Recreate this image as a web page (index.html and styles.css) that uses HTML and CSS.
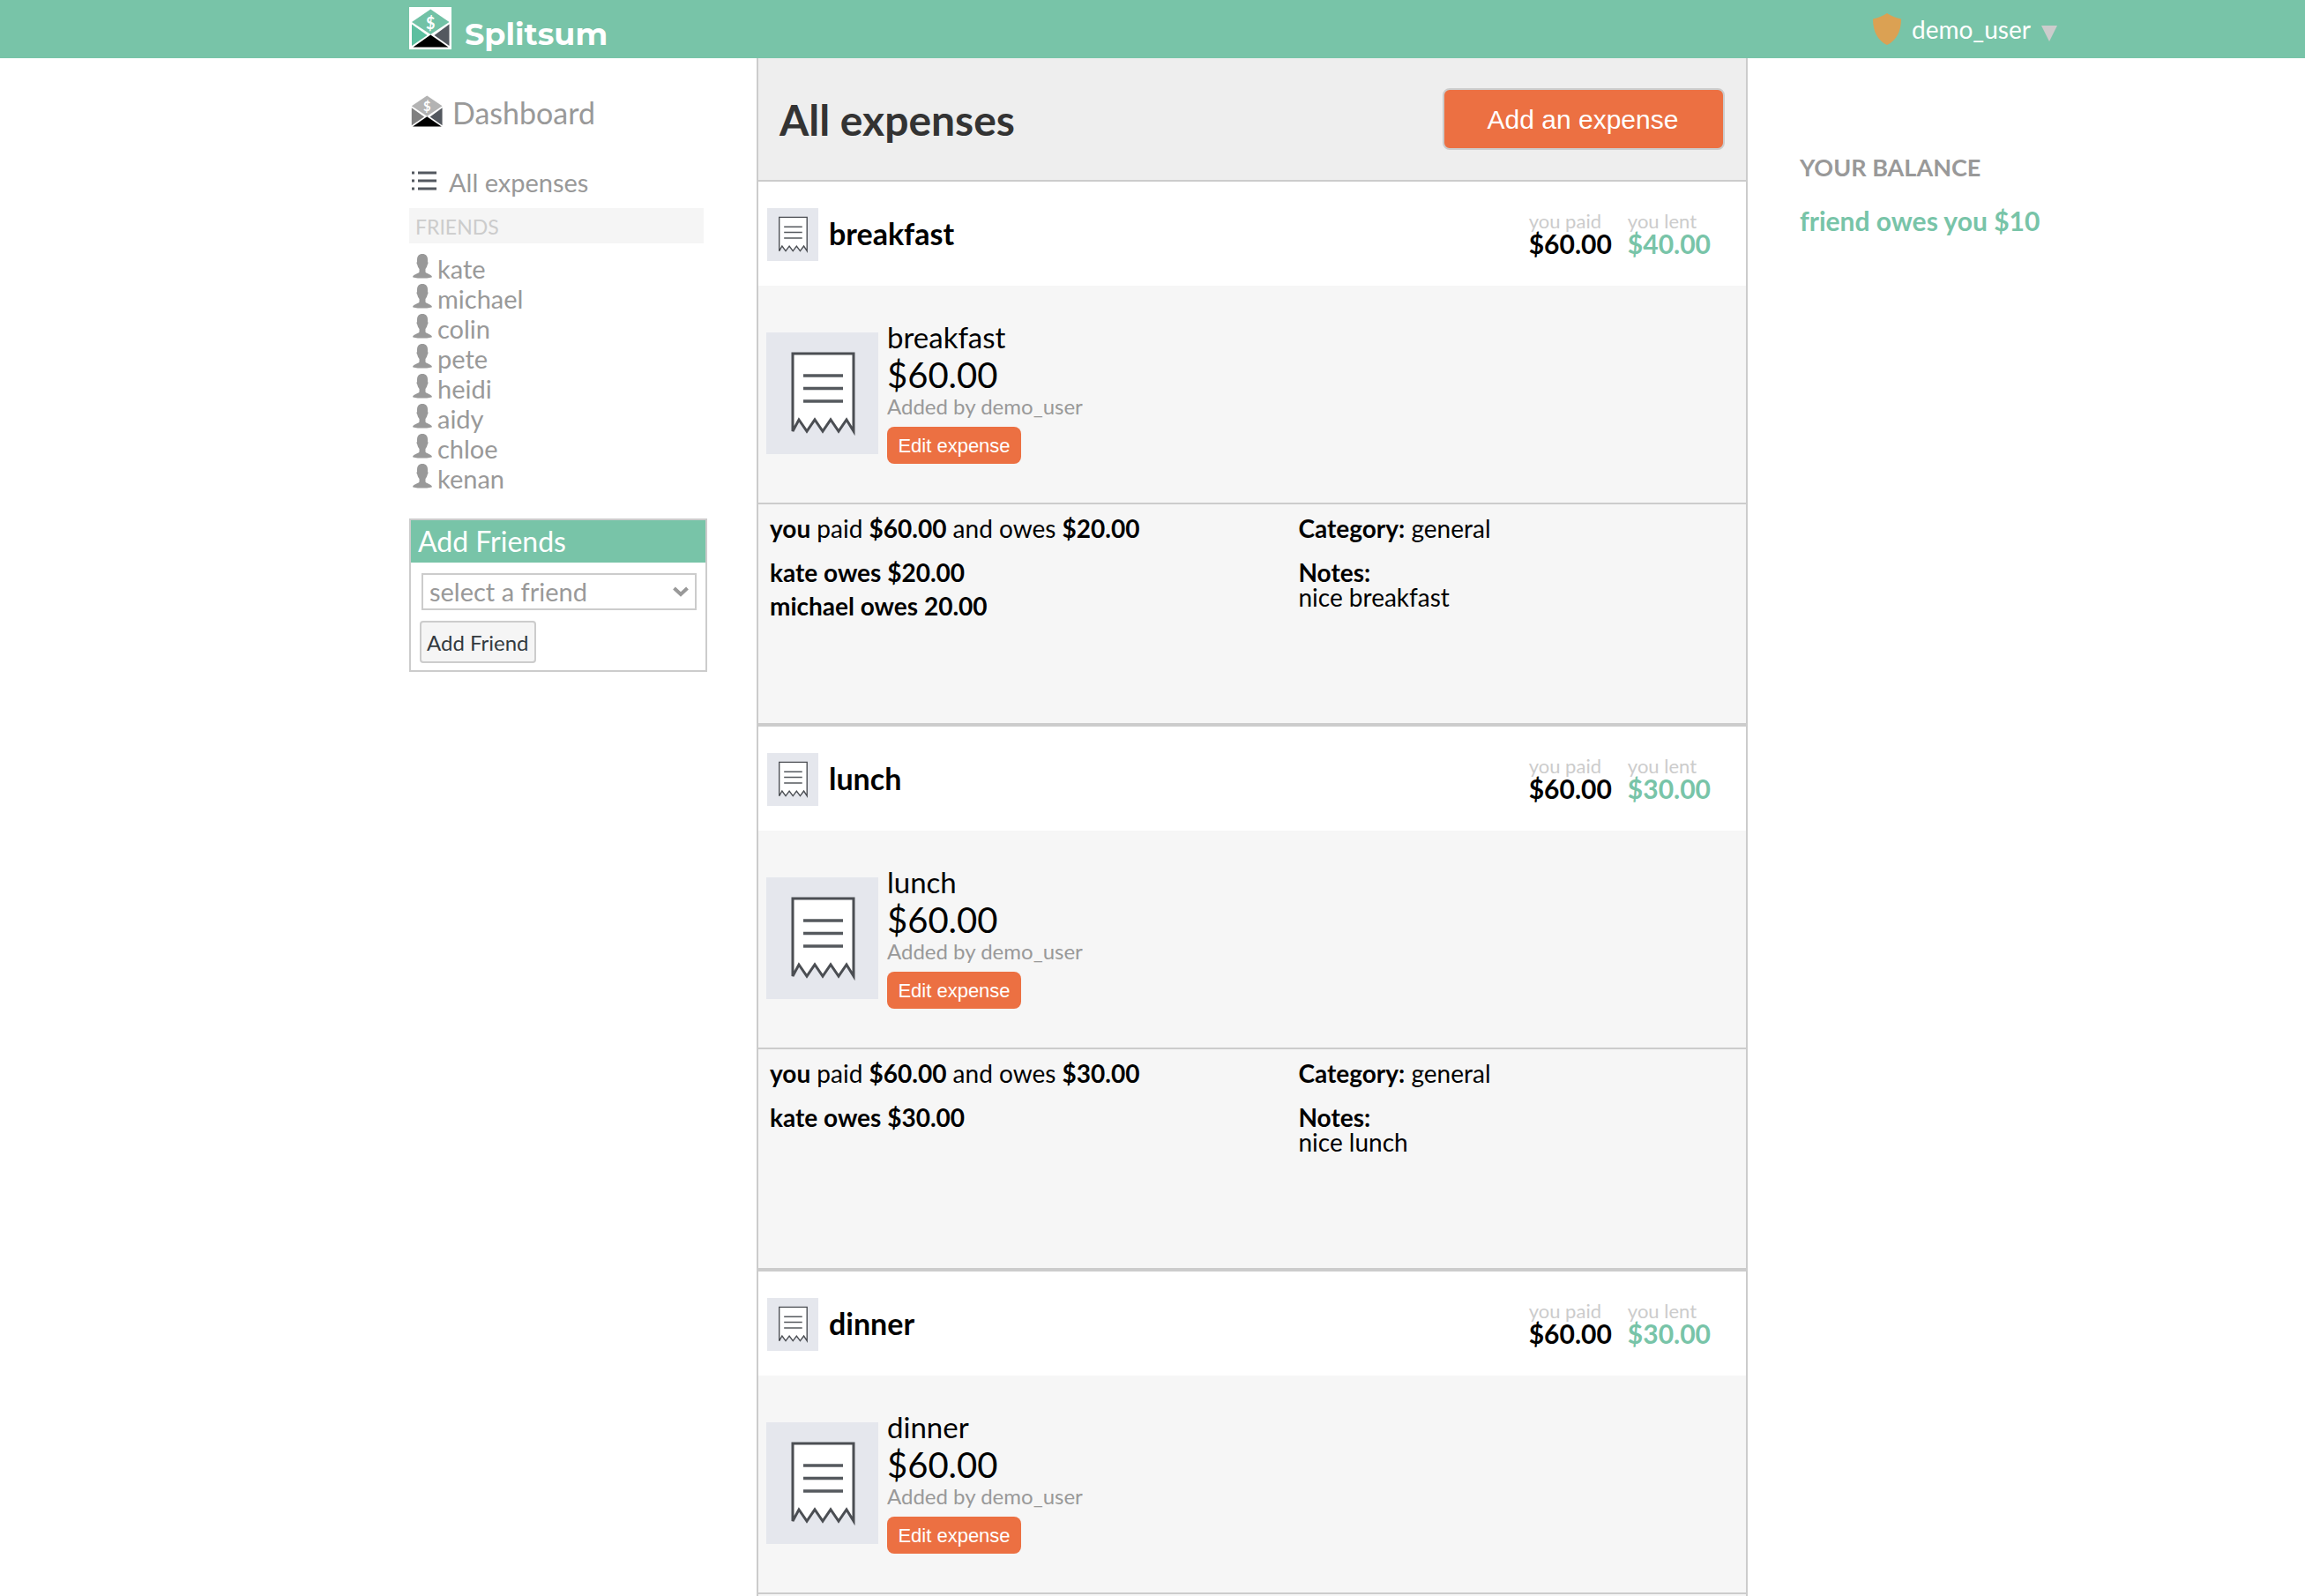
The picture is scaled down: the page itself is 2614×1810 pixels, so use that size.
FILE: index.html
```html
<!DOCTYPE html>
<html lang="en">
<head>
<meta charset="utf-8">
<title>Splitsum</title>
<meta name="viewport" content="width=device-width, initial-scale=1">
<link rel="stylesheet" href="styles.css">
</head>
<body>
<svg class="sprite" aria-hidden="true">
  <symbol id="envelope" viewBox="0 0 48 48">
    <path class="env-top" d="M24.300 2.500 45.500 17 24.300 31 3 17Z"/>
    <path class="env-left" d="M3 19.500V44L20.500 32Z"/>
    <path class="env-right" d="M45.500 19.500V44L28.500 32Z"/>
    <path fill="#000" d="M4.500 45.500H44.500L24.300 31.500Z"/>
    <text class="env-sign" x="24.300" y="24.500" text-anchor="middle">$</text>
  </symbol>
  <symbol id="receipt" viewBox="0 0 127 138" preserveAspectRatio="none">
    <rect width="127" height="138" fill="#e5e7ed"/>
    <path d="M30 24H99V112L91 99 82 112 73 99 64 112 55 99 46 112 37 99 30 112Z" fill="#fff" stroke="#4b4e53" stroke-width="3"/>
    <path d="M42 49H87M42 63.500H87M42 78H87" stroke="#55595e" stroke-width="3.500"/>
  </symbol>
  <symbol id="person" viewBox="0 0 22 28">
    <path fill="#999" d="M11 0C15 0 17 2.500 17 6.500V9C17.800 9.200 17.600 11.500 16.600 12.500 16.300 14.500 15.500 15.800 14.500 17V20.500C15.500 22.500 21.500 23 22 26.200 19 28 3 28 0 26.200 0.500 23 6.500 22.500 7.500 20.500V17C6.500 15.800 5.700 14.500 5.400 12.500 4.400 11.500 4.200 9.200 5 9V6.500C5 2.500 7 0 11 0Z"/>
  </symbol>
</svg>

<header class="topbar">
  <a class="brand" href="#">
    <svg class="brand-logo" aria-hidden="true"><use href="#envelope"/></svg>
    <span>Splitsum</span>
  </a>
  <button class="user" type="button">
    <svg class="user-shield" viewBox="0 0 32 36" aria-hidden="true"><path fill="#dba153" d="M16 0C20.500 3 25 4.800 32 6.500 32 21 26.500 31 16 36 5.500 31 0 21 0 6.500 7 4.800 11.500 3 16 0Z"/></svg>
    <span>demo_user</span>
    <svg class="user-caret" viewBox="0 0 18 18" aria-hidden="true"><path fill="#ccc" d="M0 0H18L9 18Z"/></svg>
  </button>
</header>

<div class="page">
  <aside class="sidebar">
    <nav class="nav">
      <a class="nav-dashboard" href="#">
        <svg class="dashboard-icon" viewBox="2 2 44 44" aria-hidden="true"><use href="#envelope" width="48" height="48"/></svg>
        <span>Dashboard</span>
      </a>
      <a class="nav-expenses" href="#">
        <svg class="list-icon" viewBox="0 0 28 22" aria-hidden="true"><path stroke="#53585f" stroke-width="3" d="M0 2H3M7 2H28M0 11H3M7 11H28M0 20H3M7 20H28"/></svg>
        <span>All expenses</span>
      </a>
    </nav>
    <h2 class="friends-title">FRIENDS</h2>
    <ul class="friends">
      <li><a href="#"><svg class="person" aria-hidden="true"><use href="#person"/></svg>kate</a></li>
      <li><a href="#"><svg class="person" aria-hidden="true"><use href="#person"/></svg>michael</a></li>
      <li><a href="#"><svg class="person" aria-hidden="true"><use href="#person"/></svg>colin</a></li>
      <li><a href="#"><svg class="person" aria-hidden="true"><use href="#person"/></svg>pete</a></li>
      <li><a href="#"><svg class="person" aria-hidden="true"><use href="#person"/></svg>heidi</a></li>
      <li><a href="#"><svg class="person" aria-hidden="true"><use href="#person"/></svg>aidy</a></li>
      <li><a href="#"><svg class="person" aria-hidden="true"><use href="#person"/></svg>chloe</a></li>
      <li><a href="#"><svg class="person" aria-hidden="true"><use href="#person"/></svg>kenan</a></li>
    </ul>
    <form class="add-friends">
      <label class="add-friends-title" for="friend">Add Friends</label>
      <div class="add-friends-body">
        <div class="select">
          <select id="friend"><option>select a friend</option></select>
          <svg class="select-arrow" viewBox="0 0 18 12" aria-hidden="true"><path fill="none" stroke="#999" stroke-width="4" d="M1.500 2 9 9 16.500 2"/></svg>
        </div>
        <button class="add-friend" type="button">Add Friend</button>
      </div>
    </form>
  </aside>

  <main class="main">
    <div class="main-head">
      <h1>All expenses</h1>
      <button class="add-expense" type="button">Add an expense</button>
    </div>

    <article class="expense">
      <div class="summary">
        <svg class="receipt-small" aria-hidden="true"><use href="#receipt"/></svg>
        <h2>breakfast</h2>
        <div class="amount"><span>you paid</span><strong>$60.00</strong></div>
        <div class="amount lent"><span>you lent</span><strong>$40.00</strong></div>
      </div>
      <div class="detail">
        <svg class="receipt-large" aria-hidden="true"><use href="#receipt"/></svg>
        <div class="detail-text">
          <p class="detail-name">breakfast</p>
          <p class="detail-total">$60.00</p>
          <p class="detail-by">Added by demo_user</p>
          <button class="edit" type="button">Edit expense</button>
        </div>
      </div>
      <div class="split">
        <div>
          <p class="split-lead"><b>you</b> paid <b>$60.00</b> and owes <b>$20.00</b></p>
          <ul class="owes"><li>kate owes $20.00</li><li>michael owes 20.00</li></ul>
        </div>
        <div>
          <p class="split-lead"><b>Category:</b> general</p>
          <p><b>Notes:</b><br>nice breakfast</p>
        </div>
      </div>
    </article>

    <article class="expense">
      <div class="summary">
        <svg class="receipt-small" aria-hidden="true"><use href="#receipt"/></svg>
        <h2>lunch</h2>
        <div class="amount"><span>you paid</span><strong>$60.00</strong></div>
        <div class="amount lent"><span>you lent</span><strong>$30.00</strong></div>
      </div>
      <div class="detail">
        <svg class="receipt-large" aria-hidden="true"><use href="#receipt"/></svg>
        <div class="detail-text">
          <p class="detail-name">lunch</p>
          <p class="detail-total">$60.00</p>
          <p class="detail-by">Added by demo_user</p>
          <button class="edit" type="button">Edit expense</button>
        </div>
      </div>
      <div class="split">
        <div>
          <p class="split-lead"><b>you</b> paid <b>$60.00</b> and owes <b>$30.00</b></p>
          <ul class="owes"><li>kate owes $30.00</li></ul>
        </div>
        <div>
          <p class="split-lead"><b>Category:</b> general</p>
          <p><b>Notes:</b><br>nice lunch</p>
        </div>
      </div>
    </article>

    <article class="expense">
      <div class="summary">
        <svg class="receipt-small" aria-hidden="true"><use href="#receipt"/></svg>
        <h2>dinner</h2>
        <div class="amount"><span>you paid</span><strong>$60.00</strong></div>
        <div class="amount lent"><span>you lent</span><strong>$30.00</strong></div>
      </div>
      <div class="detail">
        <svg class="receipt-large" aria-hidden="true"><use href="#receipt"/></svg>
        <div class="detail-text">
          <p class="detail-name">dinner</p>
          <p class="detail-total">$60.00</p>
          <p class="detail-by">Added by demo_user</p>
          <button class="edit" type="button">Edit expense</button>
        </div>
      </div>
    </article>
  </main>

  <aside class="balance">
    <h2>YOUR BALANCE</h2>
    <p>friend owes you $10</p>
  </aside>
</div>
</body>
</html>
```
FILE: styles.css
```css
:root {
  --green: #78c4a8;
  --orange: #ec7042;
  --line: #ccc;
  --muted: #999;
  --panel: #f6f6f6;
  --columns: 464fr 394fr 1124fr 632fr;
  --env-top: #72c2a6;
  --env-left: #5cbfa0;
}

* { box-sizing: border-box; }

body {
  display: flex;
  flex-direction: column;
  min-height: 100vh;
  margin: 0;
  background: #fff;
  color: #000;
  font: 28px/28px Lato, "Open Sans", sans-serif;
}

h1, h2, p, ul { margin: 0; padding: 0; }
ul { list-style: none; }
a { color: inherit; text-decoration: none; }
svg { display: block; flex: none; }
button, select { font: inherit; cursor: pointer; }

.sprite { display: none; }
.env-top { fill: var(--env-top); }
.env-left { fill: var(--env-left); }
.env-right { fill: #53585f; }
.env-sign { fill: #fff; font: bold 18px Lato, sans-serif; }

/* Top bar */
.topbar {
  display: grid;
  grid-template-columns: var(--columns);
  align-items: center;
  height: 66px;
  background: var(--green);
  color: #fff;
}
.brand {
  grid-column: 2;
  display: flex;
  align-items: center;
  gap: 15px;
  font: bold 35px/48px Montserrat, Inter, sans-serif;
}
.brand span { padding-top: 12px; }
.brand-logo { width: 48px; height: 48px; margin-bottom: 2px; background: #fff; }
.user {
  grid-column: 4;
  display: flex;
  align-items: center;
  gap: 12px;
  padding: 0 0 0 142px;
  border: 0;
  background: none;
  color: #fff;
}
.user-shield { width: 32px; height: 36px; }
.user-caret { width: 18px; height: 18px; margin-top: 10px; }

.page {
  display: grid;
  grid-template-columns: var(--columns);
  flex: 1;
}

/* Sidebar */
.sidebar { grid-column: 2; padding: 42px 56px 0 0; color: var(--muted); }
.nav-dashboard {
  --env-top: #b3b3b3;
  --env-left: #808080;
  display: flex;
  align-items: center;
  gap: 11px;
  padding-left: 2px;
  font-size: 34px;
  line-height: 40px;
}
.dashboard-icon { width: 36px; height: 36px; margin-bottom: 4px; }
.nav-expenses {
  display: flex;
  align-items: center;
  gap: 14px;
  margin: 39px 0 9px;
  padding-left: 3px;
  font-size: 29px;
  line-height: 40px;
}
.list-icon { width: 28px; height: 22px; margin-bottom: 4px; }
.friends-title {
  width: 334px;
  max-width: 100%;
  margin-bottom: 12px;
  padding: 2px 7px 0;
  background: #f5f5f5;
  color: var(--line);
  font-size: 23px;
  font-weight: 400;
  line-height: 38px;
}
.friends a {
  display: flex;
  gap: 6px;
  padding-left: 4px;
  font-size: 29px;
  line-height: 34px;
}
.person { width: 22px; height: 28px; }

.add-friends { margin-top: 28px; border: 2px solid var(--line); }
.add-friends-title {
  display: block;
  padding-left: 8px;
  background: var(--green);
  color: #fff;
  font-size: 32px;
  line-height: 48px;
}
.add-friends-body { padding: 12px 10px 8px; }
.select { position: relative; margin-bottom: 12px; padding-left: 2px; }
.select select {
  appearance: none;
  display: block;
  width: 100%;
  height: 42px;
  padding: 0 7px;
  border: 2px solid var(--line);
  border-radius: 0;
  background: #fff;
  color: var(--muted);
  font-size: 29px;
}
.select-arrow {
  position: absolute;
  top: 15px;
  right: 9px;
  width: 18px;
  height: 12px;
  pointer-events: none;
}
.add-friend {
  height: 48px;
  padding: 2px 6px 0;
  border: 2px solid var(--line);
  border-radius: 4px;
  background: #f5f5f5;
  color: #333a40;
  font-size: 24px;
}

/* Expenses */
.main {
  grid-column: 3;
  display: flex;
  flex-direction: column;
  border: solid var(--line);
  border-width: 0 2px;
  background: var(--panel);
}
.main-head {
  display: flex;
  align-items: center;
  justify-content: space-between;
  padding: 34px 24px;
  border-bottom: 2px solid var(--line);
  background: #eee;
}
h1 { padding-top: 2px; color: #333; font-size: 48px; line-height: 56px; }
.add-expense {
  width: 320px;
  height: 70px;
  padding: 2px 8px 0 6px;
  border: 2px solid var(--line);
  border-radius: 8px;
  background: var(--orange);
  color: #fff;
  font: 30px "Liberation Sans", Arial, sans-serif;
}
.expense + .expense { border-top: 4px solid var(--line); }
.summary {
  display: flex;
  align-items: center;
  gap: 12px;
  padding: 30px 40px 28px 10px;
  background: #fff;
}
.summary h2 { flex: 1; padding-bottom: 2px; font-size: 34px; line-height: 40px; }
.receipt-small { width: 58px; height: 60px; }
.amount { display: flex; flex-direction: column; padding-bottom: 2px; }
.amount span { color: var(--line); font-size: 22px; line-height: 22px; }
.amount strong { font-size: 30px; line-height: 28px; }
.amount.lent { margin-left: 6px; }
.lent strong { color: var(--green); }

.detail {
  display: flex;
  align-items: center;
  gap: 10px;
  padding: 38px 9px 40px;
  border-bottom: 2px solid var(--line);
}
.receipt-large { width: 127px; height: 138px; }
.detail-text { padding-bottom: 4px; }
.detail-name { font-size: 33px; line-height: 40px; }
.detail-total { font-size: 40px; line-height: 46px; }
.detail-by { color: var(--muted); font-size: 24px; line-height: 26px; }
.edit {
  display: block;
  width: 152px;
  height: 42px;
  margin-top: 10px;
  padding: 2px 0 0;
  border: 0;
  border-radius: 8px;
  background: var(--orange);
  color: #fff;
  font: 22px "Liberation Sans", Arial, sans-serif;
}

.split {
  display: grid;
  grid-template-columns: 6fr 5fr;
  column-gap: 6px;
  min-height: 248px;
  padding: 13px;
}
.split-lead { margin-bottom: 22px; }
.owes { display: grid; align-content: start; gap: 10px; font-weight: 700; }

/* Balance */
.balance { grid-column: 4; padding: 110px 0 0 59px; font-weight: 700; }
.balance h2 { margin-bottom: 32px; color: var(--muted); font-size: 27px; }
.balance p { color: var(--green); font-size: 30px; }
```
